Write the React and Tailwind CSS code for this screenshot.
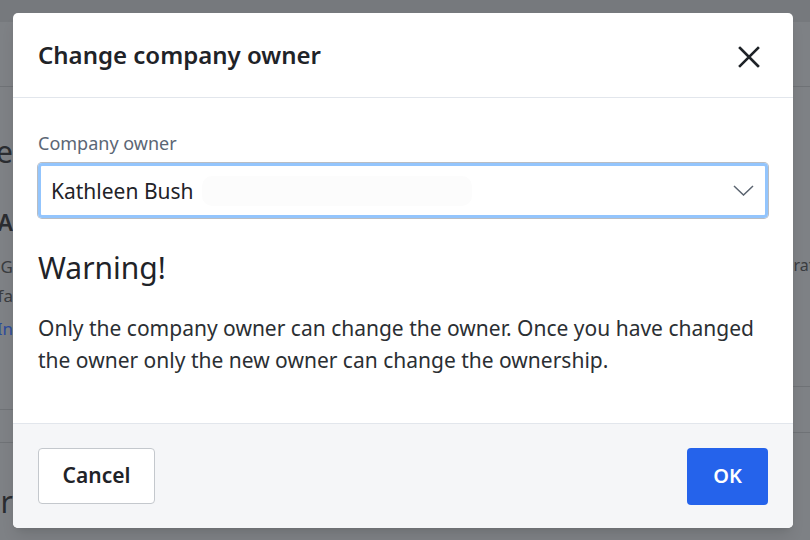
import React from "react";

export default function App() {
  const font = { fontFamily: '"Noto Sans", "Open Sans", sans-serif' };
  return (
    <div className="relative w-[810px] h-[540px] overflow-hidden bg-[#7e8185]" style={font}>
      {/* page behind the overlay */}
      <div className="flex flex-col w-full h-full">
        <div className="h-[22px] bg-[#76797d] shrink-0" />
        <div className="h-[65px] border-b border-[#6f7276] shrink-0" />
        <div className="flex flex-1">
          <div className="w-[13px] shrink-0 flex flex-col text-[#2b2d31]">
            <div className="flex justify-end whitespace-nowrap mt-[45px] text-[30px] leading-[40px]">Profile</div>
            <div className="flex justify-end whitespace-nowrap mt-[35px] text-[23px] leading-[30px] font-semibold">A</div>
            <div className="flex justify-end whitespace-nowrap mt-[16px] text-[17px] leading-[28px] text-[#3a3c40]">General G</div>
            <div className="flex justify-end whitespace-nowrap mt-[1px] text-[17px] leading-[28px] text-[#3a3c40]">fa</div>
            <div className="flex justify-end whitespace-nowrap mt-[5px] text-[17px] leading-[28px] text-[#2c4a9c]">In</div>
            <div className="w-[13px] mt-[66px] border-t border-[#6f7276]" />
            <div className="w-[13px] mt-[32px] border-t border-[#6f7276]" />
            <div className="flex justify-end whitespace-nowrap mt-[39px] text-[30px] leading-[40px]">Owner</div>
          </div>
          <div className="flex-1" />
          <div className="w-[30px] shrink-0 flex flex-col text-[#3a3c40]">
            <div className="whitespace-nowrap mt-[166px] text-[16px] leading-[24px] -ml-[30px]">corporate</div>
            <div className="w-[30px] mt-[109px] border-t border-[#6f7276]" />
            <div className="w-[30px] mt-[45px] border-t border-[#6f7276]" />
          </div>
        </div>
      </div>

      {/* modal */}
      <div className="absolute left-[13px] top-[13px] w-[780px] h-[515px] rounded-[5px] bg-white flex flex-col overflow-hidden shadow-lg">
        <div className="h-[85px] shrink-0 px-[25px] flex items-center justify-between border-b border-[#e2e6ec]">
          <div className="text-[24px] font-semibold text-[#1f2328] leading-[32px]">Change company owner</div>
          <svg width="22" height="22" viewBox="0 0 22 22" className="mr-[8px] mt-[4px]">
            <path d="M2 2 L20 20 M20 2 L2 20" stroke="#1f2328" strokeWidth="2.6" strokeLinecap="square" />
          </svg>
        </div>
        <div className="flex-1 flex flex-col px-[25px] pt-[32px]">
          <div className="text-[18px] leading-[26px] text-[#5b6675]">Company owner</div>
          <div className="mt-[7px] h-[55px] rounded-[4px] border-[3px] border-[#93c5fd] shadow-[0_0_0_1px_#b9bdc3] flex items-center pl-[10px] pr-[10px]">
            <span className="text-[21px] text-[#1f2328] leading-[28px]">Kathleen Bush</span>
            <span className="ml-[8px] w-[270px] h-[30px] rounded-[10px] bg-[#fcfcfc]" />
            <span className="flex-1" />
            <svg width="21" height="11" viewBox="0 0 21 11" className="mr-[1px]">
              <path d="M1 1 L10.5 10 L20 1" fill="none" stroke="#5b6470" strokeWidth="1.5" />
            </svg>
          </div>
          <div className="mt-[31px] text-[30px] leading-[38px] text-[#1f2328]">Warning!</div>
          <div className="mt-[25px] text-[21px] leading-[32px] text-[#2b2f33]">
            Only the company owner can change the owner. Once you have changed the owner only the new owner can change the ownership.
          </div>
        </div>
        <div className="h-[105px] shrink-0 bg-[#f5f6f8] border-t border-[#e2e6ec] px-[25px] flex items-center justify-between">
          <button className="w-[117px] h-[56px] bg-white border border-[#c4c8cd] rounded-[4px] text-[21px] font-semibold text-[#1f2328]">Cancel</button>
          <button className="w-[81px] h-[57px] bg-[#2563eb] rounded-[4px] text-[20px] font-semibold text-white">OK</button>
        </div>
      </div>
    </div>
  );
}
